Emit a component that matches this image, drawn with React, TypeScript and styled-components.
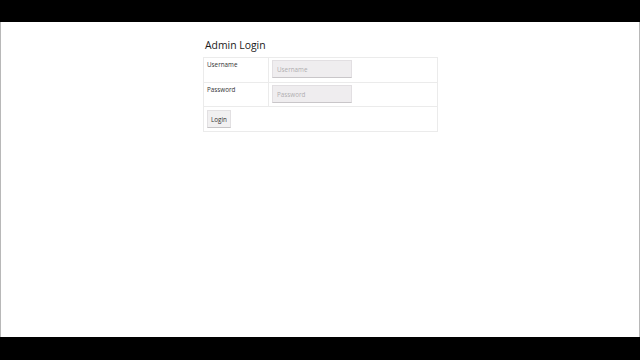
import React from "react";
import styled, { createGlobalStyle } from "styled-components";

const Global = createGlobalStyle`
  html, body { margin: 0; padding: 0; background: #000; }
  body { font-family: "Open Sans", "Liberation Sans", sans-serif; }
`;

const Screen = styled.div`
  width: 640px;
  height: 360px;
  display: flex;
  flex-direction: column;
  background: #000;
`;

const Bar = styled.div<{ $h: number }>`
  height: ${(p) => p.$h}px;
  flex: none;
  background: #000;
`;

const Page = styled.main`
  flex: none;
  height: 315px;
  background: #fff;
  border-left: 1px solid #b8b8b8;
  border-right: 1px solid #b8b8b8;
  box-sizing: border-box;
  padding: 16px 0 0 202px;
`;

const Panel = styled.div`
  width: 235px;
`;

const Title = styled.h1`
  margin: 0 0 4px 2px;
  font-size: 10.4px;
  line-height: 15px;
  font-weight: 500;
  color: #1a1a1a;
`;

const Table = styled.div`
  border: 1px solid #ebebeb;
  display: grid;
  grid-template-columns: 65px 1fr;
  grid-template-rows: 25px 24px 24px;
`;

const LabelCell = styled.div`
  border-bottom: 1px solid #ebebeb;
  border-right: 1px solid #ebebeb;
  padding: 2px 3px;
  font-size: 6.3px;
  line-height: 9px;
  color: #333;
  box-sizing: border-box;
`;

const FieldCell = styled.div`
  border-bottom: 1px solid #ebebeb;
  padding: 2px 3px;
  box-sizing: border-box;
`;

const FooterCell = styled.div`
  grid-column: 1 / 3;
  padding: 3px 2px;
  box-sizing: border-box;
`;

const Input = styled.input`
  display: block;
  width: 80px;
  height: 18px;
  box-sizing: border-box;
  margin: 0;
  padding: 0 4px;
  border: 1px solid #e2dfe2;
  border-bottom: 1.5px solid #c9c6c9;
  background: #efedef;
  font-family: "Open Sans", "Liberation Sans", sans-serif;
  font-size: 6.3px;
  color: #333;
  outline: none;
  &::placeholder { color: #b0adb0; }
`;

const Button = styled.button`
  display: block;
  width: 24px;
  height: 18px;
  box-sizing: border-box;
  margin: 0 0 0 1px;
  padding: 0;
  border: 1px solid #e2e0e2;
  border-bottom: 1.5px solid #c6c4c6;
  background: #f1f0f1;
  font-family: "Open Sans", "Liberation Sans", sans-serif;
  font-size: 6.3px;
  color: #333;
`;

export default function App() {
  return (
    <>
      <Global />
      <Screen>
        <Bar $h={22} />
        <Page>
          <Panel>
            <Title>Admin Login</Title>
            <Table>
              <LabelCell>Username</LabelCell>
              <FieldCell>
                <Input placeholder="Username" />
              </FieldCell>
              <LabelCell>Password</LabelCell>
              <FieldCell>
                <Input type="password" placeholder="Password" />
              </FieldCell>
              <FooterCell>
                <Button>Login</Button>
              </FooterCell>
            </Table>
          </Panel>
        </Page>
        <Bar $h={23} />
      </Screen>
    </>
  );
}
